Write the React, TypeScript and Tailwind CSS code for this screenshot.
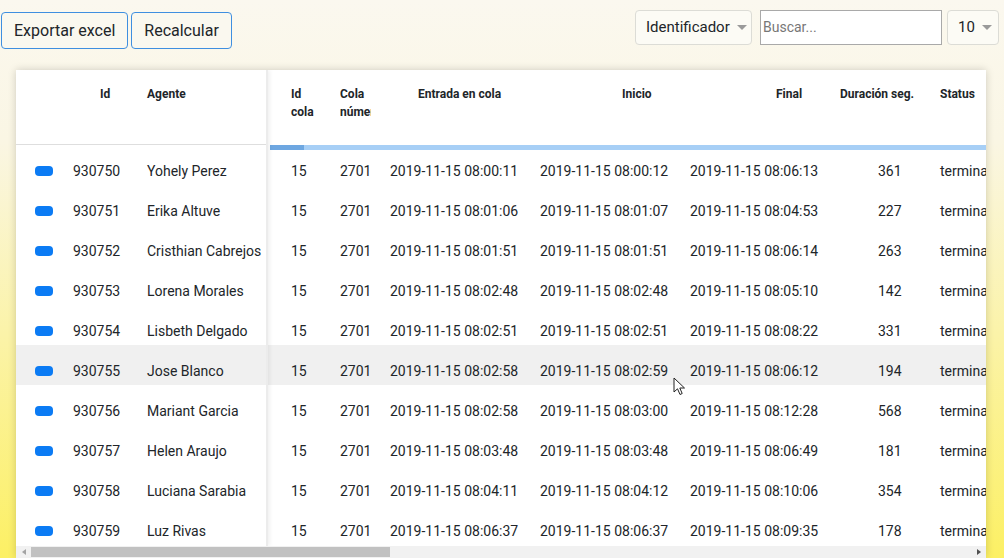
import React from 'react';

type Row = {
  id: number;
  agente: string;
  entrada: string;
  inicio: string;
  final: string;
  dur: number;
};

const rows: Row[] = [
  { id: 930750, agente: 'Yohely Perez', entrada: '08:00:11', inicio: '08:00:12', final: '08:06:13', dur: 361 },
  { id: 930751, agente: 'Erika Altuve', entrada: '08:01:06', inicio: '08:01:07', final: '08:04:53', dur: 227 },
  { id: 930752, agente: 'Cristhian Cabrejos', entrada: '08:01:51', inicio: '08:01:51', final: '08:06:14', dur: 263 },
  { id: 930753, agente: 'Lorena Morales', entrada: '08:02:48', inicio: '08:02:48', final: '08:05:10', dur: 142 },
  { id: 930754, agente: 'Lisbeth Delgado', entrada: '08:02:51', inicio: '08:02:51', final: '08:08:22', dur: 331 },
  { id: 930755, agente: 'Jose Blanco', entrada: '08:02:58', inicio: '08:02:59', final: '08:06:12', dur: 194 },
  { id: 930756, agente: 'Mariant Garcia', entrada: '08:02:58', inicio: '08:03:00', final: '08:12:28', dur: 568 },
  { id: 930757, agente: 'Helen Araujo', entrada: '08:03:48', inicio: '08:03:48', final: '08:06:49', dur: 181 },
  { id: 930758, agente: 'Luciana Sarabia', entrada: '08:04:11', inicio: '08:04:12', final: '08:10:06', dur: 354 },
  { id: 930759, agente: 'Luz Rivas', entrada: '08:06:37', inicio: '08:06:37', final: '08:09:35', dur: 178 },
];

const day = '2019-11-15 ';
const hovered = 930755;

const Caret = () => (
  <span className="ml-[7px] inline-block w-0 h-0 border-l-[5px] border-r-[5px] border-t-[5px] border-l-transparent border-r-transparent border-t-[#9a9a9a]" />
);

export default function App() {
  return (
    <div
      className="relative w-[1004px] h-[558px] overflow-hidden text-[#212529] bg-[linear-gradient(to_bottom,#fbf8ef_0%,#faf6e4_25%,#fbf3a8_60%,#fcf064_100%)]"
      style={{ fontFamily: 'Roboto, "Liberation Sans", sans-serif' }}
    >
      {/* toolbar */}
      <div className="flex items-start justify-between pl-px pr-[5px] h-[70px]">
        <div className="flex gap-[3px] mt-3">
          <button className="h-[37px] px-3 rounded border border-[#3f8fe0] bg-[#faf8ef] text-[16px]">Exportar excel</button>
          <button className="h-[37px] px-3 rounded border border-[#3f8fe0] bg-[#faf8ef] text-[16px]">Recalcular</button>
        </div>
        <div className="flex gap-[5px] mt-[10px]">
          <div className="h-[35px] w-[117px] flex items-center pl-[10px] rounded border border-[#dcdcd6] bg-[#fcfbf5] text-[15px]">
            Identificador
            <Caret />
          </div>
          <div className="ml-[3px] h-[35px] w-[182px] flex items-center pl-[2px] border border-[#a9a9a9] bg-white text-[14px] text-[#777]">
            Buscar...
          </div>
          <div className="h-[35px] w-[52px] flex items-center pl-[10px] rounded border border-[#dcdcd6] bg-[#fcfbf5] text-[15px]">
            10
            <Caret />
          </div>
        </div>
      </div>

      {/* panel */}
      <div className="relative ml-4 w-[970px] h-[488px] bg-white shadow-[0_0_8px_rgba(0,0,0,0.18)] flex flex-col">
        <div className="flex flex-1 overflow-hidden">
          {/* fixed left */}
          <div className="w-[252px] shrink-0 border-r-2 border-[#ececec] shadow-[2px_0_4px_rgba(0,0,0,0.06)] z-10 bg-white">
            <div className="h-[75px] flex text-[12px] font-bold border-b border-[#dedede]">
              <div className="w-[57px]" />
              <div className="w-[74px] pl-[27px] pt-[15px] leading-[18px]">Id</div>
              <div className="w-[119px] pt-[15px] leading-[18px]">Agente</div>
            </div>
            {rows.map((r) => (
              <div
                key={r.id}
                className={`h-[40px] pt-3 flex items-center text-[14px] ${r.id === hovered ? 'bg-[#f0f0f0]' : ''}`}
              >
                <div className="w-[57px] pl-[19px]">
                  <div className="w-[18px] h-[10px] rounded-[4px] bg-[#0b7bf4]" />
                </div>
                <div className="w-[74px]">{r.id}</div>
                <div className="w-[119px] whitespace-nowrap">{r.agente}</div>
              </div>
            ))}
          </div>

          {/* scrollable right */}
          <div className="flex-1 overflow-hidden relative">
            <div className="w-[764px]">
              <div className="h-[75px] flex text-[12px] font-bold leading-[18px] pt-[15px]">
                <div className="w-[72px] pl-[23px] shrink-0">Id<br />cola</div>
                <div className="w-[50px] shrink-0">
                  <div className="w-[31px] overflow-hidden whitespace-nowrap">Cola<br />número</div>
                </div>
                <div className="w-[150px] pl-[28px] shrink-0">Entrada en cola</div>
                <div className="w-[150px] pl-[82px] shrink-0">Inicio</div>
                <div className="w-[150px] pl-[86px] shrink-0">Final</div>
                <div className="w-[100px] shrink-0 whitespace-nowrap">Duración seg.</div>
                <div className="w-[92px] shrink-0">Status</div>
              </div>
              <div className="relative">
                <div className="absolute left-[2px] right-0 top-0 h-[5px] bg-[#a7cff6]">
                  <div className="w-[34px] h-full bg-[#6ea7e1]" />
                </div>
                {rows.map((r) => (
                  <div
                    key={r.id}
                    className={`h-[40px] pt-3 flex items-center text-[14px] whitespace-nowrap ${r.id === hovered ? 'bg-[#f0f0f0]' : ''}`}
                  >
                    <div className="w-[72px] pl-[23px] shrink-0">15</div>
                    <div className="w-[50px] shrink-0">2701</div>
                    <div className="w-[150px] shrink-0">{day + r.entrada}</div>
                    <div className="w-[150px] shrink-0">{day + r.inicio}</div>
                    <div className="w-[150px] shrink-0">{day + r.final}</div>
                    <div className="w-[100px] pl-[38px] shrink-0">{r.dur}</div>
                    <div className="w-[92px] shrink-0">terminada</div>
                  </div>
                ))}
              </div>
            </div>
          </div>
        </div>

        {/* horizontal scrollbar */}
        <div className="h-[12px] shrink-0 bg-[#f1f1f1] flex items-center relative z-20">
          <div className="w-[15px] flex justify-center">
            <span className="w-0 h-0 border-t-[3px] border-b-[3px] border-r-[4px] border-t-transparent border-b-transparent border-r-[#a3a3a3]" />
          </div>
          <div className="h-[10px] w-[359px] bg-[#c1c1c1]" />
          <div className="flex-1" />
          <div className="w-[15px] flex justify-center">
            <span className="w-0 h-0 border-t-[3px] border-b-[3px] border-l-[4px] border-t-transparent border-b-transparent border-l-[#505050]" />
          </div>
        </div>
      </div>

      {/* mouse cursor */}
      <svg className="absolute left-[673px] top-[377px]" width="14" height="20" viewBox="0 0 14 20">
        <path d="M1 1 L1 15 L4.5 11.8 L7 17.5 L9.2 16.5 L6.8 11 L11.5 11 Z" fill="white" stroke="#222" strokeWidth="1" strokeLinejoin="round" />
      </svg>
    </div>
  );
}
